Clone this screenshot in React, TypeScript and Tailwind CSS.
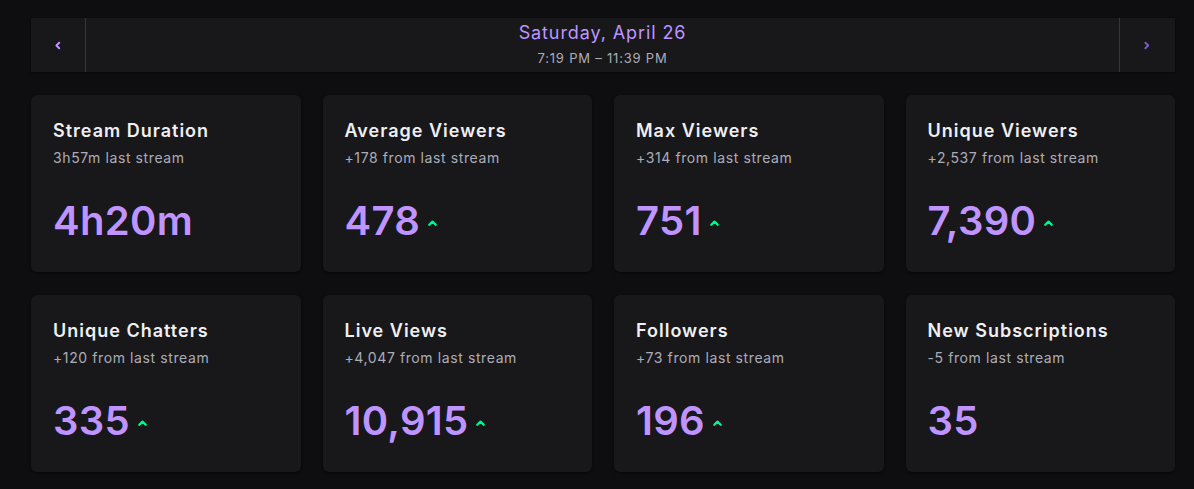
import React from 'react';

interface Stat {
    title: string;
    subtitle: string;
    value: string;
    up: boolean;
}

const stats: Stat[] = [
    { title: 'Stream Duration', subtitle: '3h57m last stream', value: '4h20m', up: false },
    { title: 'Average Viewers', subtitle: '+178 from last stream', value: '478', up: true },
    { title: 'Max Viewers', subtitle: '+314 from last stream', value: '751', up: true },
    { title: 'Unique Viewers', subtitle: '+2,537 from last stream', value: '7,390', up: true },
    { title: 'Unique Chatters', subtitle: '+120 from last stream', value: '335', up: true },
    { title: 'Live Views', subtitle: '+4,047 from last stream', value: '10,915', up: true },
    { title: 'Followers', subtitle: '+73 from last stream', value: '196', up: true },
    { title: 'New Subscriptions', subtitle: '-5 from last stream', value: '35', up: false },
];

const Chevron: React.FC<{ dir: 'left' | 'right' | 'up'; className?: string }> = ({ dir, className }) => {
    const d = dir === 'left' ? 'M6 1L2 5l4 4' : dir === 'right' ? 'M2 1l4 4-4 4' : 'M1 6l4-4 4 4';
    return (
        <svg viewBox="0 0 10 10" className={className} fill="none" stroke="currentColor" strokeWidth={2.8} strokeLinecap="round" strokeLinejoin="round">
            <path d={d} />
        </svg>
    );
};

const StatCard: React.FC<{ stat: Stat }> = ({ stat }) => (
    <div className="h-[177px] rounded-md bg-[#18181b] px-[22px] pt-[22px] shadow-[0_1px_3px_rgba(0,0,0,0.6)]">
        <h3 className="text-[18px] font-semibold leading-7 tracking-[1px] text-[#efeff1]">{stat.title}</h3>
        <p className="mt-[3px] text-sm leading-5 tracking-[0.6px] text-[#adadb8]">{stat.subtitle}</p>
        <div className="mt-[29px] flex items-center">
            <span className="text-[40px] font-semibold leading-[48px] tracking-[0.3px] text-[#bf94ff]">{stat.value}</span>
            {stat.up && <Chevron dir="up" className="ml-[8px] mt-[6px] h-[8px] w-[9px] text-[#00f593]" />}
        </div>
    </div>
);

export default function App() {
    return (
        <div className="min-h-screen bg-[#0e0e10] pl-[31px] pt-[18px] font-['Inter','Noto_Sans',sans-serif]">
            <div className="w-[1144px]">
                <div className="flex h-[54px] bg-[#18181b] shadow-[0_1px_2px_rgba(0,0,0,0.5)]">
                    <button className="flex w-[55px] items-center justify-center border-r border-[#35353b] text-[#bf94ff]">
                        <Chevron dir="left" className="h-[9px] w-[7px]" />
                    </button>
                    <div className="flex flex-1 flex-col items-center pt-[3px]">
                        <div className="text-[18px] leading-6 tracking-[0.9px] text-[#bf94ff]">Saturday, April 26</div>
                        <div className="mt-[4px] text-[13px] leading-[18px] tracking-[0.8px] text-[#adadb8]">7:19 PM – 11:39 PM</div>
                    </div>
                    <button className="flex w-[56px] items-center justify-center border-l border-[#35353b] text-[#7d5bbe]">
                        <Chevron dir="right" className="h-[9px] w-[7px]" />
                    </button>
                </div>
                <div className="mt-[23px] grid grid-cols-4 gap-x-[22px] gap-y-[23px]">
                    {stats.map(s => (
                        <StatCard key={s.title} stat={s} />
                    ))}
                </div>
            </div>
        </div>
    );
}
